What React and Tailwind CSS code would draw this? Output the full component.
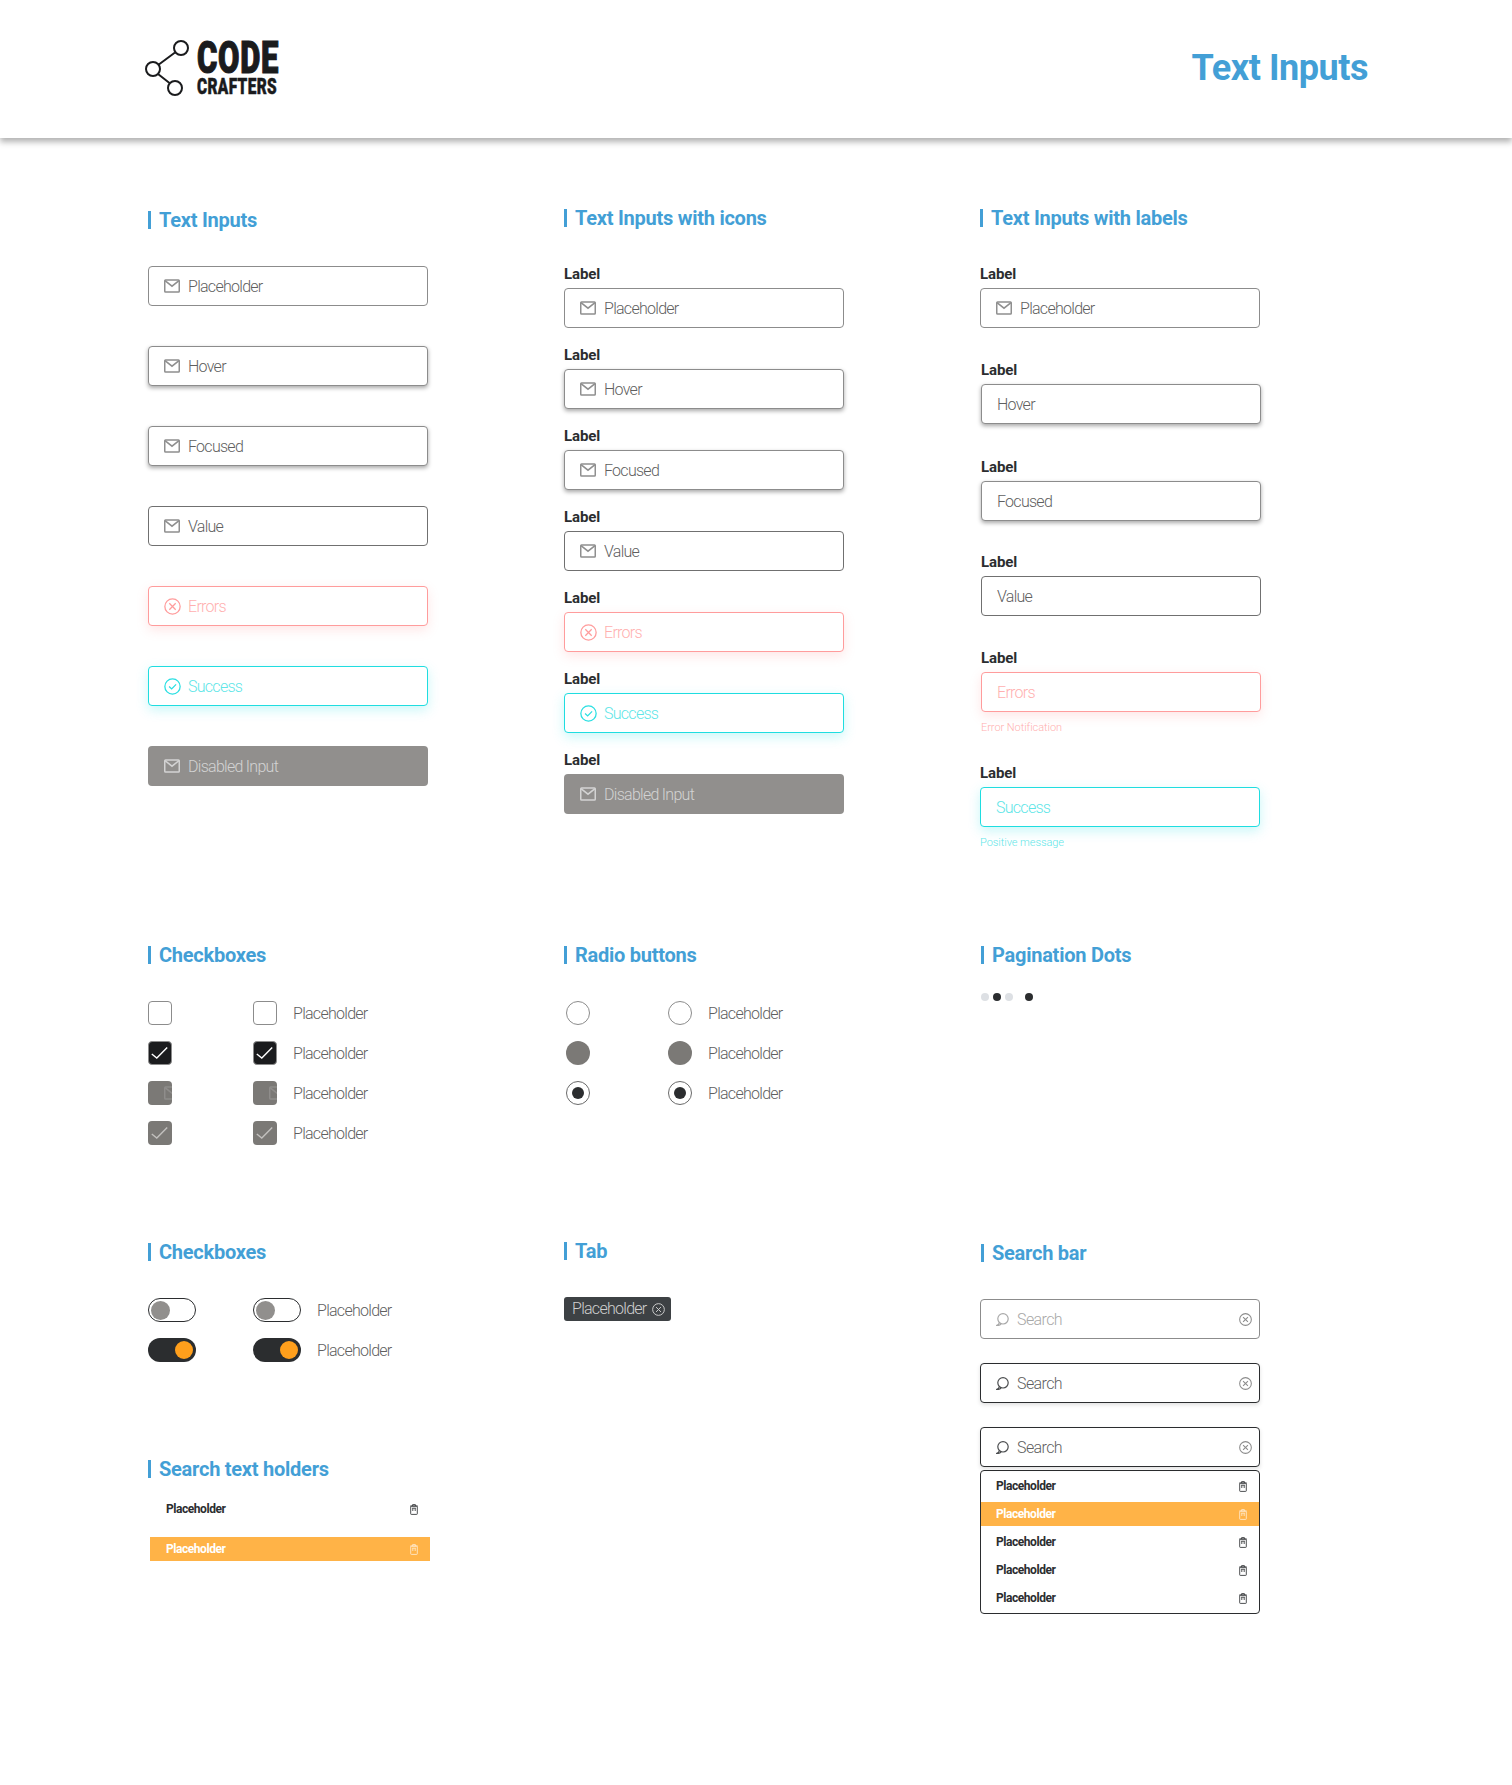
import React from "react";

const Mail = ({ c = "#8f8f8f", className = "" }) => (
  <svg width="16" height="14" viewBox="0 0 16 14" fill="none" stroke={c} strokeWidth="1.5" className={"shrink-0 " + className}>
    <rect x="0.75" y="0.9" width="14.5" height="12.2" rx="0.8" />
    <path d="M1 1.6 L8 7.2 L15 1.6" />
  </svg>
);
const XCircle = ({ c, s = 17, w = 1.2, className = "" }) => (
  <svg width={s} height={s} viewBox="0 0 16 16" fill="none" stroke={c} strokeWidth={w} className={"shrink-0 " + className}>
    <circle cx="8" cy="8" r="7.2" />
    <path d="M5 5 L11 11 M11 5 L5 11" />
  </svg>
);
const CheckCircle = ({ c, className = "" }) => (
  <svg width="17" height="17" viewBox="0 0 16 16" fill="none" stroke={c} strokeWidth="1.2" className={"shrink-0 " + className}>
    <circle cx="8" cy="8" r="7.2" />
    <path d="M4.8 8 L7.2 10.3 L11.4 6" />
  </svg>
);
const Search = ({ c }) => (
  <svg width="13" height="13" viewBox="0 0 13 13" fill="none" stroke={c} strokeWidth="1.2" className="shrink-0">
    <circle cx="7" cy="5.8" r="5.2" />
    <path d="M3.4 9.6 C3 10.8 2 11.8 0.8 12.4 C2.6 12.6 4 12.2 5 11" />
  </svg>
);
const Trash = ({ c = "#3a3c3e" }) => (
  <svg width="8" height="11" viewBox="0 0 8 11" fill="none" stroke={c} strokeWidth="0.9" className="shrink-0">
    <path d="M0.2 2 H7.8 M2.6 2 V0.6 H5.4 V2" />
    <rect x="0.7" y="2.2" width="6.6" height="8.2" rx="0.6" />
    <path d="M2.2 4.2 H5.8 M2.8 4.2 V7 M5.2 4.2 V7" />
  </svg>
);
const Tick = ({ c }) => (
  <svg width="24" height="24" viewBox="0 0 24 24" fill="none" stroke={c} strokeWidth="1.4" className="shrink-0">
    <path d="M3.8 13 L8.8 17 L19.2 6.6" />
  </svg>
);

const Title = ({ children, className = "" }) => (
  <h2 className={"flex h-[18px] items-center border-l-[3px] border-[#439fd6] text-[20px] font-bold tracking-[-0.25px] text-[#439fd6] " + className}>
    {children}
  </h2>
);

const variants = {
  placeholder: { box: "border border-[#8c8c8c] bg-white pl-[15px]", text: "text-[#5f5f5f]" },
  hover: { box: "border border-[#8c8c8c] bg-white pl-[15px] shadow-[0_2px_4px_rgba(0,0,0,0.35)]", text: "text-[#5f5f5f]" },
  value: { box: "border border-[#707070] bg-white pl-[15px]", text: "text-[#5f5f5f]" },
  error: { box: "border border-[#ff9c9c] bg-white pl-[15px] shadow-[0_4px_12px_rgba(255,130,130,0.2)]", text: "text-[#ffb0b0]" },
  success: { box: "border border-[#1fdde0] bg-white pl-[15px] shadow-[0_4px_12px_rgba(60,225,230,0.28)]", text: "text-[#5fe6e8]" },
  disabled: { box: "bg-[#918f8d] pl-4", text: "text-[#d3d3d3]" },
};

const Input = ({ kind = "placeholder", label, icon = true }) => {
  const v = variants[kind];
  return (
    <div className={"flex h-10 w-[280px] items-center gap-2 rounded-[4px] text-[16px] font-light tracking-[-0.72px] " + v.box + " " + v.text}>
      {icon && kind === "error" && <XCircle c="#ff9c9c" className="-mr-px" />}
      {icon && kind === "success" && <CheckCircle c="#2adfe2" className="-mr-px" />}
      {icon && kind === "disabled" && <Mail c="#d3d3d3" />}
      {icon && kind !== "error" && kind !== "success" && kind !== "disabled" && <Mail />}
      <span className="pt-px">{label}</span>
    </div>
  );
};

const Label = () => (
  <div className="mb-1 flex h-5 items-center text-[15px] font-bold tracking-[-0.1px] text-[#2b2d2f]">Label</div>
);

const Text = ({ children }) => (
  <span className="ml-4 pt-px text-[16px] font-light tracking-[-0.72px] text-[#5f5f5f]">{children}</span>
);

const Disabledbox = () => (
  <div className="flex h-6 w-6 shrink-0 items-center overflow-hidden rounded-[4px] bg-[#7b7976]">
    <Mail c="#8f8d8b" className="ml-4" />
  </div>
);

const boxEmpty = <div className="h-6 w-6 shrink-0 rounded-[4px] border border-[#8c8c8c] bg-white" />;
const boxDark = <div className="h-6 w-6 shrink-0 rounded-[4px] border border-[#8c8c8c] bg-[#1b1c1e]"><div className="-m-px"><Tick c="#ffffff" /></div></div>;
const boxGray = <div className="h-6 w-6 shrink-0 rounded-[4px] bg-[#7b7976]"><Tick c="#c2c0be" /></div>;

const CheckRow = ({ box }) => (
  <div className="flex h-6 items-center">
    {box}
    <div className="ml-[81px]">{box}</div>
    <Text>Placeholder</Text>
  </div>
);

const radioEmpty = <div className="h-6 w-6 shrink-0 rounded-full border border-[#8c8c8c] bg-white" />;
const radioFill = <div className="h-6 w-6 shrink-0 rounded-full bg-[#7b7976]" />;
const radioOn = (
  <div className="flex h-6 w-6 shrink-0 items-center justify-center rounded-full border border-[#6a6a6a] bg-white">
    <div className="h-3 w-3 rounded-full bg-[#2b2d2f]" />
  </div>
);
const RadioRow = ({ box }) => (
  <div className="ml-[2px] flex h-6 items-center">
    {box}
    <div className="ml-[78px]">{box}</div>
    <Text>Placeholder</Text>
  </div>
);

const toggleOff = (
  <div className="flex h-6 w-12 shrink-0 items-center rounded-full border border-[#2b2d2f] bg-white pl-[2px]">
    <div className="h-[19px] w-[19px] rounded-full bg-[#918f8d]" />
  </div>
);
const toggleOn = (
  <div className="flex h-6 w-12 shrink-0 items-center justify-end rounded-full bg-[#2b2d2f] pr-[3px]">
    <div className="h-[18px] w-[18px] rounded-full bg-[#ff9f1c]" />
  </div>
);
const ToggleRow = ({ box }) => (
  <div className="flex h-6 items-center">
    {box}
    <div className="ml-[57px]">{box}</div>
    <Text>Placeholder</Text>
  </div>
);

const SearchBar = ({ active }) => (
  <div className={"flex h-10 w-[280px] items-center rounded-[4px] border bg-white pl-[15px] pr-[7px] text-[16px] font-light tracking-[-0.6px] " + (active ? "border-[#2b2d2f] text-[#5f5f5f] shadow-[0_2px_4px_rgba(0,0,0,0.12)]" : "border-[#8c8c8c] text-[#a8a8a8]")}>
    <Search c={active ? "#4a4c4e" : "#a8a8a8"} />
    <span className="ml-2 pt-px">Search</span>
    <div className="ml-auto"><XCircle c="#8c8c8c" s={13} w={1.3} /></div>
  </div>
);

const Row = ({ on, first }) => (
  <div className={"flex h-6 items-center justify-between pr-[12px] text-[12px] font-bold tracking-[-0.45px] " + (first ? "pl-4 " : "pl-[15px] ") + (on ? "bg-[#ffb347] text-white" : "text-[#2b2d2f]")}>
    <span>Placeholder</span>
    <Trash c={on ? "#ffe9c9" : "#3a3c3e"} />
  </div>
);

const Dot = ({ dark, className = "" }) => (
  <div className={"h-2 w-2 rounded-full " + (dark ? "bg-[#2b2d2f] " : "bg-[#dde0e4] ") + className} />
);

export default function App() {
  return (
    <div className="min-h-[1785px] bg-white font-['Roboto',sans-serif]">
      <header className="flex h-[138px] items-center justify-between pl-[145px] pr-[144px] shadow-[0_4px_6px_rgba(0,0,0,0.3)]">
        <div className="flex items-center">
          <svg width="46" height="58" viewBox="0 0 46 58" fill="none" stroke="#1a1b1d" strokeWidth="2" className="mb-1 shrink-0">
            <circle cx="36" cy="10" r="7" />
            <circle cx="8" cy="31" r="7" />
            <circle cx="30" cy="50" r="7" />
            <path d="M30 14.5 L13.5 26.8 M13 36 L24.8 45.2" />
          </svg>
          <div className="mb-[2px] ml-[6px] flex w-[80px] flex-col text-[#1a1b1d]">
            <span className="flex h-[32px] origin-left scale-x-[0.69] items-center text-[45px] font-black leading-none tracking-[1px] whitespace-nowrap [-webkit-text-stroke:1.2px_#1a1b1d]">CODE</span>
            <span className="mt-[6px] flex h-[16px] origin-left scale-x-[0.7] items-center text-[22px] font-black leading-none tracking-[0.5px] whitespace-nowrap [-webkit-text-stroke:0.5px_#1a1b1d]">CRAFTERS</span>
          </div>
        </div>
        <h1 className="mb-[2px] text-[36px] font-bold tracking-[-0.45px] text-[#439fd6]">Text Inputs</h1>
      </header>

      <main className="pl-[148px]">
        <section className="grid h-[808px] grid-cols-[416px_416px_416px] pt-[71px]">
          <div className="pt-[2px]">
            <Title className="mb-[37px] pl-2">Text Inputs</Title>
            <div className="flex flex-col gap-10">
              <Input label="Placeholder" />
              <Input kind="hover" label="Hover" />
              <Input kind="hover" label="Focused" />
              <Input kind="value" label="Value" />
              <Input kind="error" label="Errors" />
              <Input kind="success" label="Success" />
              <Input kind="disabled" label="Disabled Input" />
            </div>
          </div>
          <div>
            <Title className="mb-[37px] pl-2">Text Inputs with icons</Title>
            <div className="flex flex-col gap-[17px]">
              {[
                ["placeholder", "Placeholder"],
                ["hover", "Hover"],
                ["hover", "Focused"],
                ["value", "Value"],
                ["error", "Errors"],
                ["success", "Success"],
                ["disabled", "Disabled Input"],
              ].map(([k, l]) => (
                <div key={l}>
                  <Label />
                  <Input kind={k} label={l} />
                </div>
              ))}
            </div>
          </div>
          <div>
            <Title className="mb-[37px] pl-2">Text Inputs with labels</Title>
            <Label />
            <Input label="Placeholder" />
            <div className="ml-px mt-8">
              <Label />
              <Input kind="hover" label="Hover" icon={false} />
            </div>
            <div className="ml-px mt-[33px]">
              <Label />
              <Input kind="hover" label="Focused" icon={false} />
            </div>
            <div className="ml-px mt-[31px]">
              <Label />
              <Input kind="value" label="Value" icon={false} />
            </div>
            <div className="ml-px mt-8">
              <Label />
              <Input kind="error" label="Errors" icon={false} />
              <div className="mt-2 flex h-4 items-center text-[11px] font-light tracking-[-0.05px] text-[#ffb0b0]">Error Notification</div>
            </div>
            <div className="mt-[27px]">
              <Label />
              <Input kind="success" label="Success" icon={false} />
              <div className="mt-2 flex h-4 items-center text-[11px] font-light tracking-[-0.05px] text-[#5fe6e8]">Positive message</div>
            </div>
          </div>
        </section>

        <section className="grid h-[297px] grid-cols-[416px_416px_416px]">
          <div>
            <Title className="mb-[37px] pl-2">Checkboxes</Title>
            <div className="flex flex-col gap-4">
              <CheckRow box={boxEmpty} />
              <CheckRow box={boxDark} />
              <CheckRow box={<Disabledbox />} />
              <CheckRow box={boxGray} />
            </div>
          </div>
          <div>
            <Title className="mb-[37px] pl-2">Radio buttons</Title>
            <div className="flex flex-col gap-4">
              <RadioRow box={radioEmpty} />
              <RadioRow box={radioFill} />
              <RadioRow box={radioOn} />
            </div>
          </div>
          <div className="pl-px">
            <Title className="mb-[29px] pl-[8px]">Pagination Dots</Title>
            <div className="flex items-center">
              <Dot />
              <Dot dark className="ml-1" />
              <Dot className="ml-1" />
              <Dot dark className="ml-3" />
            </div>
          </div>
        </section>

        <section className="grid grid-cols-[416px_416px_416px]">
          <div>
            <Title className="mb-[37px] pl-2">Checkboxes</Title>
            <div className="flex flex-col gap-4">
              <ToggleRow box={toggleOff} />
              <ToggleRow box={toggleOn} />
            </div>
            <Title className="mb-[19px] mt-[98px] pl-2">Search text holders</Title>
            <div className="ml-[2px] flex w-[280px] flex-col gap-4">
              <Row first />
              <Row first on />
            </div>
          </div>
          <div className="-mt-px">
            <Title className="mb-[37px] pl-2">Tab</Title>
            <div className="flex h-6 w-[107px] items-center rounded-[3px] bg-[#3d4144] pl-2 text-[16px] font-light tracking-[-0.72px] text-[#cfcfcf]">
              <span>Placeholder</span>
              <div className="ml-[5px]"><XCircle c="#cfcfcf" s={13} w={1.2} /></div>
            </div>
          </div>
          <div className="mt-px">
            <Title className="mb-[37px] ml-px pl-[8px]">Search bar</Title>
            <div className="flex flex-col gap-6">
              <SearchBar />
              <SearchBar active />
              <SearchBar active />
            </div>
            <div className="mt-[3px] flex w-[280px] flex-col gap-1 rounded-[4px] border border-[#2b2d2f] pb-[3px] pt-[3px]">
              <Row />
              <Row on />
              <Row />
              <Row />
              <Row />
            </div>
          </div>
        </section>
      </main>
    </div>
  );
}
